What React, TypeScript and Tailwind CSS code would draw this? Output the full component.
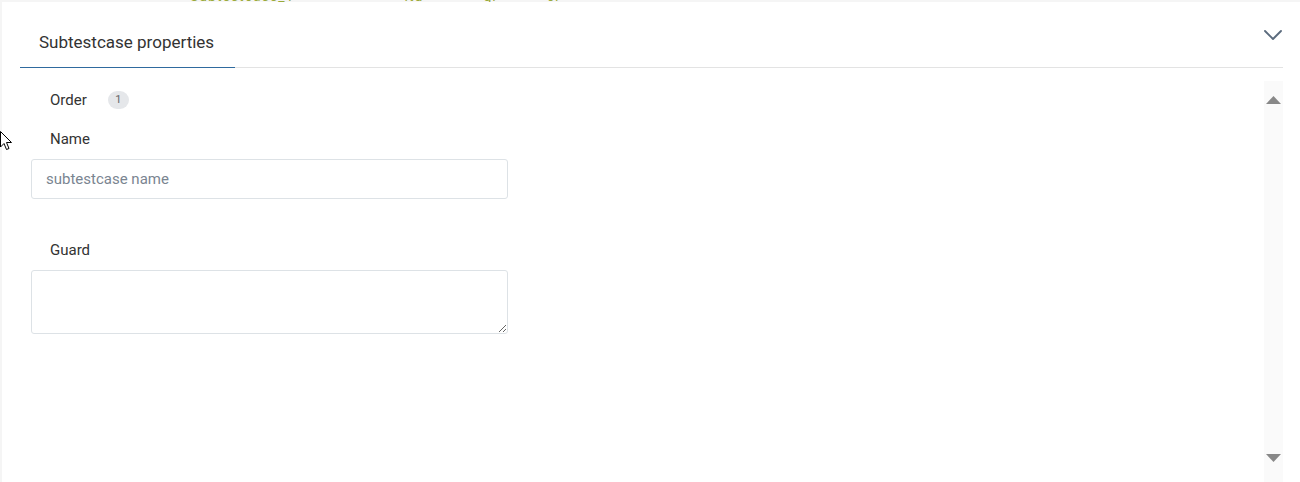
import { ChevronDown } from "lucide-react";

function Cursor() {
  return (
    <svg className="absolute left-0 top-[131px]" width="13" height="20" viewBox="0 0 13 20">
      <path d="M0.5 0.5 L0.5 16 L4 12.5 L6.5 18.5 L9 17.5 L6.5 11.5 L11.5 11.5 Z" fill="#fff" stroke="#000" strokeWidth="1" />
    </svg>
  );
}

export default function App() {
  return (
    <div className="relative w-[1300px] h-[482px] overflow-hidden bg-[#f5f5f5] font-['Roboto',sans-serif] text-[#333]">
      {/* bottom edge of the panel above */}
      <div className="h-[2px] overflow-hidden pl-[190px]">
        <div className="-mt-[11px] text-[14px] leading-[14px] text-[#9aaa3a] tracking-[1px]">
          <span className="mr-[110px]">Subtestcase_1</span>
          <span className="mr-[60px]">ltd</span>
          <span className="mr-[50px]">gl</span>
          <span>cl</span>
        </div>
      </div>

      <div className="ml-[2px] h-[480px] bg-white flex flex-col">
        {/* header / tabs */}
        <div className="flex items-stretch h-[66px] pl-[18px] pr-[17px]">
          <div className="flex-1 flex items-end border-b border-[#e3e3e3]">
            <div className="w-[215px] h-[66px] flex items-center pt-[16px] pl-[19px] border-b-[1.5px] border-[#2f6a9e] -mb-[1px] text-[17px] text-[#333]">
              Subtestcase properties
            </div>
          </div>
          <div className="absolute right-[11px] top-[19px] text-[#5b6b7d]">
            <ChevronDown size={32} strokeWidth={1.4} />
          </div>
        </div>

        <div className="flex flex-1 pr-[17px] pt-[13px]">
          <div className="flex-1 flex flex-col pl-[29px] pt-[9px]">
            <div className="flex items-center gap-[21px] pl-[19px] h-[20px]">
              <span className="text-[15px] text-[#333]">Order</span>
              <span className="w-[21px] h-[18px] rounded-full bg-[#e5e7ea] text-[#666] text-[11px] flex items-center justify-center">1</span>
            </div>
            <div className="pl-[19px] mt-[20px] text-[15px] leading-[18px] text-[#333]">Name</div>
            <input
              className="mt-[11px] w-[477px] h-[40px] border border-[#dde2e6] rounded-[3px] px-[14px] text-[15px] text-[#333] placeholder:text-[#7a8591] outline-none"
              placeholder="subtestcase name"
            />
            <div className="pl-[19px] mt-[42px] text-[15px] leading-[18px] text-[#333]">Guard</div>
            <textarea className="mt-[11px] w-[477px] h-[64px] border border-[#dde2e6] rounded-[3px] px-[14px] py-[8px] text-[15px] outline-none" />
          </div>
          {/* scrollbar */}
          <div className="w-[19px] bg-[#fafafa] flex flex-col items-center justify-between pt-[15px] pb-[20px]">
            <svg width="15" height="8" viewBox="0 0 15 8"><path d="M7.5 0 L15 8 L0 8 Z" fill="#888" /></svg>
            <svg width="15" height="8" viewBox="0 0 15 8"><path d="M0 0 L15 0 L7.5 8 Z" fill="#888" /></svg>
          </div>
        </div>
      </div>
      <Cursor />
    </div>
  );
}
